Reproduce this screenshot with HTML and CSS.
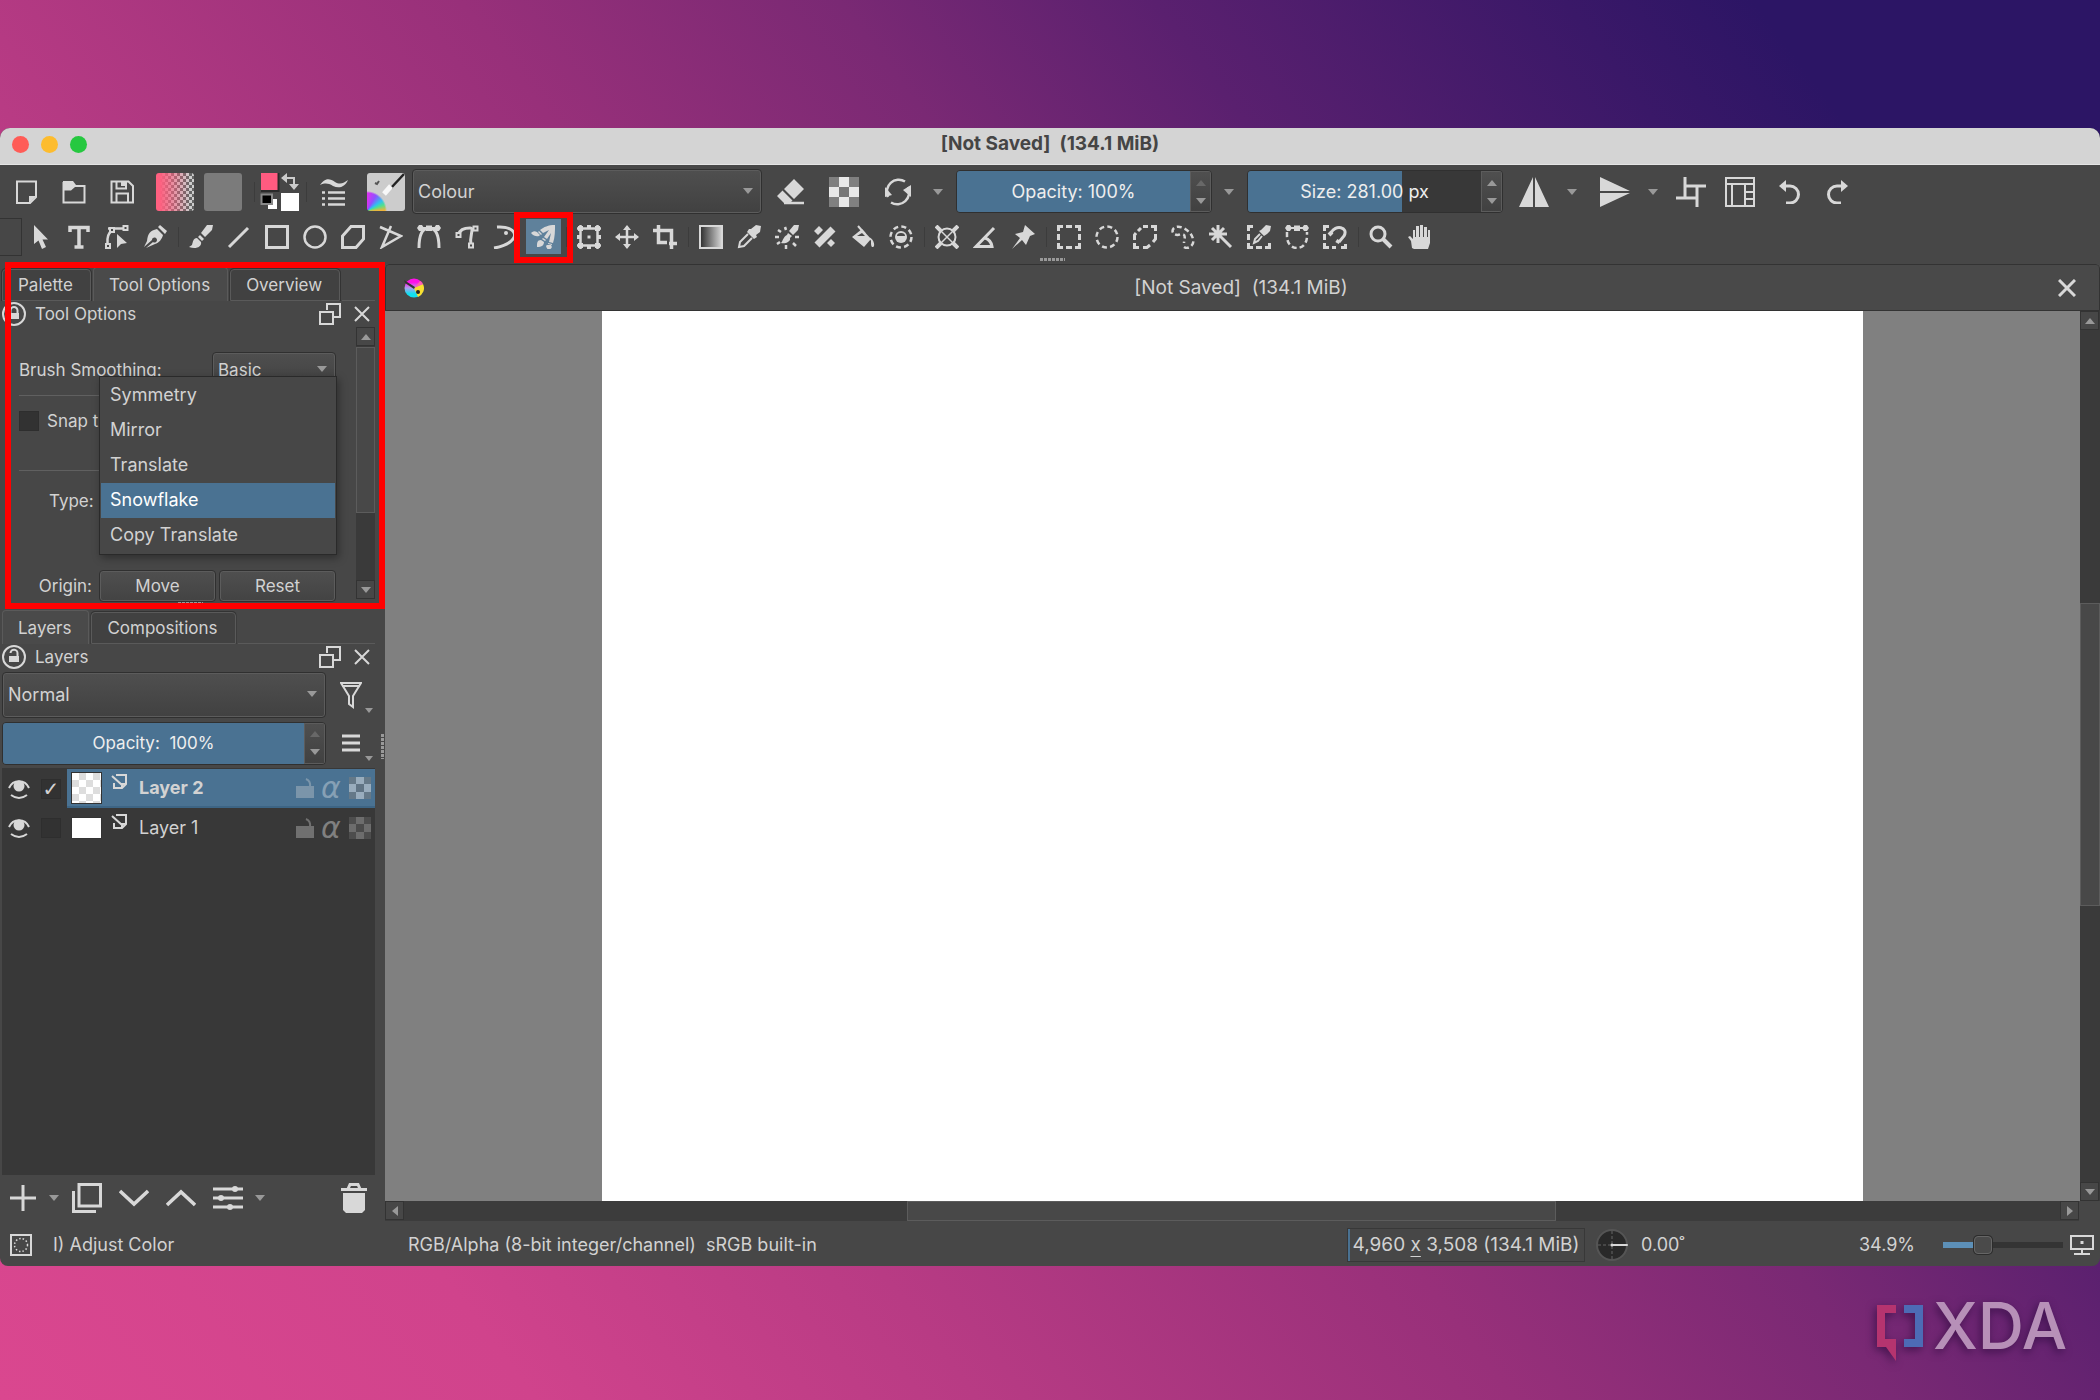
FILE: index.html
```html
<!DOCTYPE html>
<html lang="en">
<head>
<meta charset="utf-8">
<title>[Not Saved] (134.1 MiB)</title>
<link rel="stylesheet" href="styles.css">
</head>
<body>
<div class="window">
  <header class="titlebar">
    <div class="lights"><button class="light red" aria-label="Close"></button><button class="light yellow" aria-label="Minimise"></button><button class="light green" aria-label="Zoom"></button></div>
    <h1 class="window-title">[Not Saved]  (134.1 MiB)</h1>
    <span></span>
  </header>

  <div class="toolbar main-bar">
    <div class="group">
      <button class="btn" aria-label="New"><svg class="ic" viewBox="0 0 24 24"><path d="M3 1.500H22V17L16 23H3Z" stroke-width="2"/><path class="f" d="M22 16H15V23Z"/></svg></button>
      <button class="btn" aria-label="Open"><svg class="ic" viewBox="0 0 24 24"><path d="M1.500 2V22.500H22.500V6H12" stroke-width="2"/><path class="f" d="M1 1H11L14 5H23V7H13L9 10.500H1Z"/></svg></button>
      <button class="btn" aria-label="Save"><svg class="ic" viewBox="0 0 24 24"><path d="M1.500 1.500H18.500L23 6V22.500H1.500Z" stroke-width="2"/><path d="M6.500 22V13.500H18V22M6.500 2V8.500H16V2" stroke-width="2"/><path class="f" d="M11 2H15V6H11Z"/></svg></button>
    </div>
    <div class="group swatches">
      <button class="swatch gradient" aria-label="Fill gradient"></button>
      <button class="swatch pattern" aria-label="Fill pattern"></button>
    </div>
    <span class="sep"></span>
    <button class="colours" aria-label="Foreground and background colour">
      <svg class="plain" width="40" height="40" viewBox="0 0 40 40"><path d="M1 1H18V18H1Z" fill="#ff5b80"/><path d="M1 19H18.500V1" stroke="#2a2a2a"/><path d="M8 27H17V37H8Z" fill="#fff"/><path d="M1.500 22.500H12V32H1.500Z" fill="#000" stroke="#888"/><path d="M21 21H39V39H21Z" fill="#fff"/><path d="M21 6L27 1V11ZM29 12H39L34 18Z" fill="#ccc"/><path d="M26 6H34V13" stroke="#ccc" stroke-width="2"/></svg>
    </button>
    <span class="sep"></span>
    <button class="btn" aria-label="Brush settings"><svg class="ic big" viewBox="0 0 30 30"><path class="f" d="M1 8C7 0 11 2 16 5C21 8 25 6 29 3C26 10 20 12 14 9C9 6 6 6 1 8Z"/><path d="M9 15.500H26M9 21.500H26M9 27.500H26M3 15.500H6M3 21.500H6M3 27.500H6"/></svg></button>
    <button class="swatch preset" aria-label="Brush preset">
      <svg class="plain" width="38" height="38" viewBox="0 0 38 38"><path d="M37 1L24 15" stroke="#222" stroke-width="2.500"/><path d="M24 13L17 21" stroke="#f8f8f8" stroke-width="5"/><path d="M8 10L10 11L12 8" stroke="#555" stroke-width="2"/></svg>
    </button>
    <span class="combo wide"><select aria-label="Blending mode"><option>Colour</option></select></span>
    <div class="group spread">
      <button class="btn" aria-label="Eraser"><svg class="ic big" viewBox="0 0 30 30"><path class="f" d="M19 2L29 12L19 22L9 12Z M7.500 13.500L17.500 23.500L15 26H9L2 19Z"/><path d="M9 26H29"/></svg></button>
      <button class="btn" aria-label="Preserve alpha"><span class="checker"></span></button>
      <button class="btn" aria-label="Reload preset"><svg class="ic big" viewBox="0 0 30 30"><path d="M5 20A12 12 0 0 1 22 4.500M25 10A12 12 0 0 1 8 25.500"/><path class="f" d="M2 10L2 20L9 18ZM28 20L28 8L20 13Z"/></svg></button>
    </div>
    <button class="drop" aria-label="Reload options"></button>
    <span class="spin opacity"><input type="text" value="Opacity: 100%" aria-label="Opacity"><span class="steps"><button class="up off" aria-label="Increase"></button><button class="down" aria-label="Decrease"></button></span></span>
    <button class="drop" aria-label="Opacity options"></button>
    <span class="spin size"><input type="text" value="Size: 281.00 px" aria-label="Size"><span class="steps"><button class="up" aria-label="Increase"></button><button class="down" aria-label="Decrease"></button></span></span>
    <div class="group mirrors">
      <button class="btn" aria-label="Horizontal mirror"><svg class="ic big" viewBox="0 0 30 30"><path class="f" d="M14 0V30H0Z M16 0V30H30Z"/></svg></button>
      <button class="drop" aria-label="Horizontal mirror options"></button>
      <button class="btn" aria-label="Vertical mirror"><svg class="ic big" viewBox="0 0 30 30"><path class="f" d="M0 14H30L0 0Z M0 16H30L0 30Z"/></svg></button>
      <button class="drop" aria-label="Vertical mirror options"></button>
    </div>
    <div class="group last">
      <button class="btn" aria-label="Wrap around"><svg class="ic big" viewBox="0 0 30 30"><path d="M9 0V21M0 21H21M9 9H30M21 9V30" stroke-width="3"/></svg></button>
      <button class="btn" aria-label="Workspaces"><svg class="ic big" viewBox="0 0 30 30"><path d="M1 1H29V29H1ZM1 7H29M7 7V29M20 7V29M20 15H29M20 22H29" stroke-width="2"/></svg></button>
      <button class="btn" aria-label="Undo"><svg class="ic" viewBox="0 0 24 24"><path d="M8 6H13A8.500 8.500 0 0 1 13 23H9" stroke-width="3"/><path class="f" d="M2 6L9 0V12Z"/></svg></button>
      <button class="btn" aria-label="Redo"><svg class="ic" viewBox="0 0 24 24"><path d="M16 6H11A8.500 8.500 0 0 0 11 23H15" stroke-width="3"/><path class="f" d="M22 6L15 0V12Z"/></svg></button>
    </div>
  </div>

  <div class="toolbar tool-bar">
    <span class="stub"></span>
    <button class="tool" aria-label="Select shapes"><svg class="ic" viewBox="0 0 24 24"><path class="f" d="M5 0V19L9.500 15.500L13 24L17 22L13.500 14.500H19Z"/></svg></button>
    <button class="tool" aria-label="Text"><svg class="ic" viewBox="0 0 24 24"><path d="M3 7V2.500H21V7M12 2V22M7.500 22H16.500" stroke-width="3.500"/></svg></button>
    <button class="tool" aria-label="Edit shapes"><svg class="ic" viewBox="0 0 24 24"><path d="M2.500 18V14Q3 7 9 4.500M3 3.500H19" /><path d="M5 3H9V7H5ZM18.500 1H22.500V5H18.500ZM1 19H5V23H1Z" fill="#474747" stroke-width="2"/><path class="f" d="M12 9V23L16 19L22 18Z"/></svg></button>
    <button class="tool" aria-label="Calligraphy"><svg class="ic" viewBox="0 0 24 24"><path class="f" d="M15 2L22 9L24 6L17 0Z M14 4C7 6 5 8 4 16L1 22L9 15A2.500 2.500 0 1 1 10 17L3 23L12 19C16 18 19 14 20 10Z"/></svg></button>
    <span class="sep"></span>
    <button class="tool" aria-label="Freehand brush"><svg class="ic" viewBox="0 0 24 24"><path class="f" d="M24 0H18L12 8L16 12L23 5Z M11 10L15 14L13 16L9 12Z M8 13C4 13 4 17 3 20L0 22C8 25 13 21 12 17Z"/></svg></button>
    <button class="tool" aria-label="Line"><svg class="ic" viewBox="0 0 24 24"><path d="M2 22L21 3" stroke-width="3"/></svg></button>
    <button class="tool" aria-label="Rectangle"><svg class="ic" viewBox="0 0 24 24"><path d="M1.500 1.500H22.500V22.500H1.500Z" stroke-width="3"/></svg></button>
    <button class="tool" aria-label="Ellipse"><svg class="ic" viewBox="0 0 24 24"><circle cx="12" cy="12" r="10.500"/></svg></button>
    <button class="tool" aria-label="Polygon"><svg class="ic" viewBox="0 0 24 24"><path d="M10 1.500H22.500V14L15 22.500H1.500V11Z" stroke-width="3"/></svg></button>
    <button class="tool" aria-label="Polyline"><svg class="ic" viewBox="0 0 24 24"><path d="M1 2L22 11L3 22L12 1"/></svg></button>
    <button class="tool" aria-label="Bezier curve"><svg class="ic" viewBox="0 0 24 24"><path d="M2 23C2 9 6 3 12 3S22 9 22 23" stroke-width="3"/><path d="M3 3H21M10 1.500H14V5H10Z" stroke-width="2"/><path class="f" d="M0 3L2 0H5L7 3L5 6H2Z M17 3L19 0H22L24 3L22 6H19Z"/></svg></button>
    <button class="tool" aria-label="Freehand path"><svg class="ic" viewBox="0 0 24 24"><path d="M4 9C5 4 10 3 15 3C20 3 14 10 16 20" stroke-width="3"/><path d="M1.500 8H5.500V12H1.500ZM18.500 1.500H22.500V5.500H18.500ZM14 18.500H18V22.500H14Z" fill="#474747" stroke-width="2"/></svg></button>
    <button class="tool" aria-label="Dynamic brush"><svg class="ic" viewBox="0 0 24 24"><path d="M4 2C18 1 25 8 20 14C16 19 8 22 1 23" stroke-width="3"/><circle class="f" cx="13" cy="8" r="2"/></svg></button>
    <button class="tool active" aria-label="Multibrush"><svg class="ic" viewBox="0 0 24 24"><path class="f" d="M24 0C17 0 13 2 9 5L12 8L18 5L13 12L16 14L20 8L18 17L22 18C24 12 24 6 24 0ZM8 6L11 9L10 10L7 7ZM6 7C3 5 1 7 0 8C3 12 8 12 9 10ZM12 13L15 15L14 16L11 14ZM10 15C6 15 6 18 6 22C11 22 13 20 13 17ZM17 18L21 19V20L17 19ZM16 20C14 21 16 23 17 25C20 24 22 23 20 20Z"/></svg><span class="mark tool-mark"></span></button>
    <span class="sep"></span>
    <button class="tool" aria-label="Transform"><svg class="ic" viewBox="0 0 24 24"><path d="M3.500 0V24M20.500 0V24M0 3.500H24M0 20.500H24"/><path class="f" d="M1 1H6V6H1ZM18 1H23V6H18ZM1 18H6V23H1ZM18 18H23V23H18ZM10.500 10.500H13.500V13.500H10.500ZM10 0H14V3H10ZM10 21H14V24H10ZM0 10H3V14H0ZM21 10H24V14H21Z"/></svg></button>
    <button class="tool" aria-label="Move"><svg class="ic" viewBox="0 0 24 24"><path d="M12 3V21M3 12H21"/><path class="f" d="M12 0L16 5H8ZM12 24L16 19H8ZM0 12L5 8V16ZM24 12L19 8V16Z"/></svg></button>
    <button class="tool" aria-label="Crop"><svg class="ic" viewBox="0 0 24 24"><path d="M5.500 0V17.500H14M0 5.500H18.500V24M16 18.500H24" stroke-width="3.500"/></svg></button>
    <span class="sep"></span>
    <button class="tool" aria-label="Gradient"><span class="gradient-icon"></span></button>
    <button class="tool" aria-label="Colour picker"><svg class="ic" viewBox="0 0 24 24"><path class="f" d="M14 4L19 0L24 1L23 7L19 10L20 12L17 14L10 7L12 4Z"/><path d="M11 9L3 17L2 22L7 21L15 13" stroke-width="2"/></svg></button>
    <button class="tool" aria-label="Colourise mask"><svg class="ic" viewBox="0 0 24 24"><path class="f" d="M24 0H19L14 6L18 10L23 5Z M13 8L17 11L15 13C16 17 10 19 6 18C8 16 8 12 12 10Z"/><path d="M10 2L11 5M3 5L6 7M0 12H4M2 19L5 17M11 20V24M18 18L21 21M20 12H24" stroke-width="2.500"/></svg></button>
    <button class="tool" aria-label="Smart patch"><svg class="ic" viewBox="0 0 24 24"><path d="M4 20L20 4" stroke-width="7"/><path class="f" d="M6 1L10 5L5 10L1 6ZM18 14L22 18L18 22L14 18Z"/></svg></button>
    <button class="tool" aria-label="Fill"><svg class="ic" viewBox="0 0 24 24"><path class="f" d="M1 12L11 4L20 14L13 22ZM18 12C24 15 24 22 22 22S20 20 20 16Z"/><path d="M7 1L14 9" stroke-width="2"/><path d="M6 11H14L11 8Z" fill="#474747" stroke="none"/></svg></button>
    <button class="tool" aria-label="Enclose and fill"><svg class="ic" viewBox="0 0 24 24"><circle cx="12" cy="12" r="10.500" stroke-dasharray="5 3.250"/><circle class="f" cx="12" cy="12" r="6"/><path d="M8 11A4 3 0 0 1 16 11Z" fill="#474747" stroke="none"/></svg></button>
    <span class="sep"></span>
    <button class="tool" aria-label="Assistants"><svg class="ic" viewBox="0 0 24 24"><circle cx="12" cy="12" r="8.500" stroke-width="2"/><path d="M2 2L22 22M22 2L2 22" stroke-width="1.500"/><path d="M1 1L6 6M23 1L18 6M1 23L6 18M23 23L18 18" stroke-width="4"/></svg></button>
    <button class="tool" aria-label="Measure"><svg class="ic" viewBox="0 0 24 24"><path d="M21 3L3 21.500H19Q18 15 12 13" stroke-width="3"/></svg></button>
    <button class="tool" aria-label="Reference images"><svg class="ic" viewBox="0 0 24 24"><path class="f" d="M14 0L24 9L19 11L15 20L11 15L1 24L9 13L4 9L12 7Z"/></svg></button>
    <span class="sep"></span>
    <button class="tool" aria-label="Rectangular selection"><svg class="ic" viewBox="0 0 24 24"><path d="M1.500 6V1.500H6M18 1.500H22.500V6M22.500 18V22.500H18M6 22.500H1.500V18M9 1.500H15M9 22.500H15M1.500 9V15M22.500 9V15" stroke-width="3"/></svg></button>
    <button class="tool" aria-label="Elliptical selection"><svg class="ic" viewBox="0 0 24 24"><circle cx="12" cy="12" r="10.500" stroke-dasharray="5 3.250"/></svg></button>
    <button class="tool" aria-label="Polygonal selection"><svg class="ic" viewBox="0 0 24 24"><path d="M10 1.500H15M18 1.500H22.500V6M22.500 9V14L20 17M17 20L14 22.500H10M6 22.500H1.500V18M1.500 15V10L3 8M5 6L8 3" stroke-width="3"/></svg></button>
    <button class="tool" aria-label="Freehand selection"><svg class="ic" viewBox="0 0 24 24"><path d="M13 22C17 25 24 20 22 14C20 5 8 -1 3 3C-1 7 4 12 10 9C16 9 13 14 13 18" stroke-dasharray="5 3"/></svg></button>
    <button class="tool" aria-label="Similar selection"><svg class="ic" viewBox="0 0 24 24"><path d="M9 0V18M0 9H18M3 3L22 22M3 15L15 3" stroke-width="3"/></svg></button>
    <button class="tool" aria-label="Colour selection"><svg class="ic" viewBox="0 0 24 24"><path d="M6 1.500H1.500V6M1.500 9V15M1.500 18V22.500H6M9 22.500H15M18 22.500H22.500V18" stroke-width="3"/><path class="f" d="M14 5L19 0L24 1L23 6L20 9L17 11L12 6Z"/><path d="M13 9L8 14L7 18L11 16L15 11" stroke-width="2"/></svg></button>
    <button class="tool" aria-label="Bezier selection"><svg class="ic" viewBox="0 0 24 24"><path d="M2 7V11C2 27 22 27 22 11V7" stroke-dasharray="5 3"/><path d="M3 3H21M10 1.500H14V5H10Z" stroke-width="2"/><path class="f" d="M0 3L2 0H5L7 3L5 6H2Z M17 3L19 0H22L24 3L22 6H19Z"/></svg></button>
    <button class="tool" aria-label="Magnetic selection"><svg class="ic" viewBox="0 0 24 24"><path d="M6 1.500H1.500V6M1.500 9V15M1.500 18V22.500H6M9 22.500H13M18 22.500H22.500V19" stroke-width="3"/><path d="M8 8C12 -1 26 2 21 11L16 17" stroke-width="3"/><path d="M6 10L9 7M14 18L16 15" stroke-width="4"/></svg></button>
    <span class="sep"></span>
    <button class="tool" aria-label="Zoom"><svg class="ic" viewBox="0 0 24 24"><circle cx="9" cy="9" r="7" stroke-width="3"/><path d="M14 14L22 22" stroke-width="4"/></svg></button>
    <button class="tool" aria-label="Pan"><svg class="ic" viewBox="0 0 24 24"><path class="f" d="M5 23L4 16L1 12L3 11L6 14V5H8V12H9V1H12V12H13V0H16V12H17V2H20V12H21V5H23V18L21 24H7Z"/></svg></button>
    <span class="grip across toolbar-grip"></span>
  </div>

  <div class="workspace">
    <aside class="sidebar">
      <section class="dock options-dock">
        <nav class="tabs"><button class="tab">Palette</button><button class="tab on">Tool Options</button><button class="tab">Overview</button><span class="tab-fill"></span></nav>
        <div class="dock-head">
          <svg class="lock" viewBox="0 0 24 24"><circle cx="12" cy="12" r="11"/><path d="M8.500 11V8.500A3.500 3.500 0 0 1 15.500 8.500V11"/><path class="f" d="M7 11H17V17H7Z"/></svg>
          <h2>Tool Options</h2>
          <button class="mini" aria-label="Float"><svg class="float" viewBox="0 0 22 22"><path d="M8 7V1H21V14H14M1 9H14V21H1Z"/></svg></button>
          <button class="mini" aria-label="Close"><svg class="close" viewBox="0 0 16 16"><path d="M1 1L15 15M15 1L1 15"/></svg></button>
        </div>
        <div class="options-body">
          <form class="form">
            <div class="row"><label for="smoothing">Brush Smoothing:</label><span class="combo basic"><select id="smoothing"><option>Basic</option></select></span></div>
            <hr>
            <div class="row snap"><input type="checkbox" id="snap"><label for="snap">Snap t</label></div>
            <hr>
            <div class="row type"><span id="type-label">Type:</span></div>
            <div class="row origin"><span class="origin-label">Origin:</span><button type="button" class="push">Move</button><button type="button" class="push">Reset</button></div>
            <ul class="popup" role="listbox" aria-labelledby="type-label">
              <li role="option">Symmetry</li>
              <li role="option">Mirror</li>
              <li role="option">Translate</li>
              <li role="option" class="picked" aria-selected="true">Snowflake</li>
              <li role="option">Copy Translate</li>
            </ul>
          </form>
          <div class="vscroll"><button class="arrow"><i class="tri up"></i></button><div class="track"><div class="thumb"></div></div><button class="arrow"><i class="tri"></i></button></div>
        </div>
        <span class="grip across"></span>
        <span class="mark dock-mark"></span>
      </section>

      <section class="dock layers-dock">
        <nav class="tabs"><button class="tab on">Layers</button><button class="tab">Compositions</button><span class="tab-fill"></span></nav>
        <div class="dock-head">
          <svg class="lock" viewBox="0 0 24 24"><circle cx="12" cy="12" r="11"/><path d="M8.500 8A3.500 3.500 0 0 1 15.500 8.500V11"/><path class="f" d="M7 11H17V17H7Z"/></svg>
          <h2>Layers</h2>
          <button class="mini" aria-label="Float"><svg class="float" viewBox="0 0 22 22"><path d="M8 7V1H21V14H14M1 9H14V21H1Z"/></svg></button>
          <button class="mini" aria-label="Close"><svg class="close" viewBox="0 0 16 16"><path d="M1 1L15 15M15 1L1 15"/></svg></button>
        </div>
        <div class="layer-row">
          <span class="combo blend"><select aria-label="Layer blending mode"><option>Normal</option></select></span>
          <button class="side-btn" aria-label="Filter"><svg width="22" height="28" viewBox="0 0 22 28"><path d="M1 2H21L13 15V26L9 23V15Z M2 5H20"/></svg><i class="tri"></i></button>
        </div>
        <div class="layer-row short">
          <span class="spin layer-opacity"><input type="text" value="Opacity:  100%" aria-label="Layer opacity"><span class="steps"><button class="up off" aria-label="Increase"></button><button class="down" aria-label="Decrease"></button></span></span>
          <button class="side-btn" aria-label="Layer menu"><svg width="20" height="18" viewBox="0 0 20 18"><path d="M1 2H19M1 9H19M1 16H19" stroke-width="3"/></svg><i class="tri"></i></button>
        </div>
        <ul class="layers">
          <li class="layer">
            <svg class="eye" viewBox="0 0 22 22"><circle class="f" cx="11" cy="8" r="5.500"/><path d="M1 10C5 1 17 1 21 10M3 17Q11 23 19 17"/></svg>
            <input type="checkbox" checked aria-label="Select Layer 2">
            <div class="layer-main chosen"><span class="thumbnail clear"></span><svg class="paint" viewBox="0 0 16 16"><path d="M5 2H15V11L11 15H3V10M1 3L11 12M11 15V11H15"/></svg><span class="name">Layer 2</span>
              <svg class="unlock" viewBox="0 0 18 20"><path class="f" d="M0 8H18V20H0Z"/><path d="M10 1Q15 3 14 9"/></svg><i class="alpha">α</i><span class="checker small"></span></div>
          </li>
          <li class="layer">
            <svg class="eye" viewBox="0 0 22 22"><circle class="f" cx="11" cy="8" r="5.500"/><path d="M1 10C5 1 17 1 21 10M3 17Q11 23 19 17"/></svg>
            <input type="checkbox" aria-label="Select Layer 1">
            <div class="layer-main"><span class="thumbnail"></span><svg class="paint" viewBox="0 0 16 16"><path d="M5 2H15V11L11 15H3V10M1 3L11 12M11 15V11H15"/></svg><span class="name">Layer 1</span>
              <svg class="unlock" viewBox="0 0 18 20"><path class="f" d="M0 8H18V20H0Z"/><path d="M10 1Q15 3 14 9"/></svg><i class="alpha">α</i><span class="checker small"></span></div>
          </li>
        </ul>
        <div class="layer-tools">
          <button aria-label="Add layer"><svg width="28" height="28" viewBox="0 0 28 28"><path d="M14 1V27M1 14H27" stroke-width="3"/></svg></button>
          <button class="drop" aria-label="Add options"></button>
          <button class="after-drop" aria-label="Duplicate"><svg width="30" height="30" viewBox="0 0 30 30"><path d="M7 1.500H28.500V23H7ZM1.500 8V28.500H24" stroke-width="3"/></svg></button>
          <button class="step" aria-label="Move down"><svg width="30" height="30" viewBox="0 0 30 30"><path d="M1 8L15 21L29 8" stroke-width="3.500"/></svg></button>
          <button class="step" aria-label="Move up"><svg width="30" height="30" viewBox="0 0 30 30"><path d="M1 22L15 9L29 22" stroke-width="3.500"/></svg></button>
          <button class="step" aria-label="Properties"><svg width="30" height="30" viewBox="0 0 30 30"><path d="M0 6H30M0 15H30M0 24H30" stroke-width="3"/><circle class="f" cx="22" cy="6" r="3"/><circle class="f" cx="8" cy="15" r="3"/><circle class="f" cx="17" cy="24" r="3"/></svg></button>
          <button class="drop" aria-label="Properties options"></button>
          <button class="trash" aria-label="Delete layer"><svg width="28" height="30" viewBox="0 0 28 30"><path d="M1 6.500H27M8 6L10 1.500H18L20 6" stroke-width="3"/><path class="f" d="M3 10H25V27L22 30H6L3 27Z"/></svg></button>
        </div>
        <span class="grip down-grip"></span>
      </section>
    </aside>

    <main class="document">
      <div class="doc-head">
        <svg class="plain" viewBox="0 0 20 20" width="20" height="20"><defs><linearGradient id="k" x1="0" y1="0" x2="0" y2="1"><stop offset=".2" stop-color="#ff10e8"/><stop offset=".5" stop-color="#b0a0f0"/><stop offset=".8" stop-color="#10e0f0"/></linearGradient></defs><circle cx="10" cy="10" r="9.500" fill="url(#k)"/><path d="M10 10L19 6A9.500 9.500 0 0 1 14 19Z" fill="#f8e030"/><path d="M10 10L19 6A9 9 0 0 0 16 3Z" fill="#ff60b0"/><path d="M0 2L11 9L10 11L1 5Z" fill="#333"/><circle cx="14" cy="14" r="2" fill="#222"/></svg>
        <h2>[Not Saved]  (134.1 MiB)</h2>
        <button class="mini" aria-label="Close document"><svg width="18" height="18" viewBox="0 0 18 18"><path d="M1 1L17 17M17 1L1 17" stroke-width="3"/></svg></button>
      </div>
      <div class="view">
        <div class="canvas"><div class="paper"></div></div>
        <div class="vscroll"><button class="arrow"><i class="tri up"></i></button><div class="track"><div class="thumb"></div></div><button class="arrow"><i class="tri"></i></button></div>
      </div>
      <div class="hscroll"><button class="arrow"><i class="tri left"></i></button><div class="track"><div class="thumb"></div></div><button class="arrow"><i class="tri right"></i></button><span class="corner"></span></div>
    </main>
  </div>

  <footer class="status">
    <div class="status-left">
      <button class="sel" aria-label="Selection mode"><svg width="22" height="22" viewBox="0 0 22 22"><path d="M1 1H21V21H1Z" stroke-width="2"/><circle cx="11" cy="11" r="6.500" stroke-width="1.500" stroke-dasharray="1.500 2"/></svg></button>
      <span>I) Adjust Color</span>
    </div>
    <span class="profile">RGB/Alpha (8-bit integer/channel)  sRGB built-in</span>
    <button class="dims">4,960 <u>x</u> 3,508 (134.1 MiB)</button>
    <svg class="dial" viewBox="0 0 32 32"><circle cx="16" cy="16" r="15" fill="#292929" stroke="#555" stroke-width="2"/><path d="M16 2V30M2 16H16" stroke="#666" stroke-width="1" stroke-dasharray="3 2"/><path d="M16 16H31" stroke-width="2"/><circle class="f" cx="16" cy="16" r="1.500"/><circle class="f" cx="31" cy="16" r="1"/></svg>
    <span class="angle">0.00˚</span>
    <span class="zoom">34.9%</span>
    <input class="slider" type="range" min="0" max="100" value="30" aria-label="Zoom level">
    <button class="sel" aria-label="Fit view"><svg width="24" height="20" viewBox="0 0 24 20"><path d="M1 1H23V14H1ZM12 14V18M4 19H20" stroke-width="2"/><path class="f" d="M10.500 6H13.500V9H10.500Z"/></svg></button>
  </footer>
</div>
<div class="brand">
  <svg class="plain" width="48" height="58" viewBox="0 0 48 58"><path d="M19 1H0V43H9L19 57V35H8V9H19Z" fill="#b5346f"/><path d="M27 1H46V43H27V35H38V9H27Z" fill="#4d6bb5"/></svg>
  <span>XDA</span>
</div>
</body>
</html>
```
FILE: styles.css
```css
* { box-sizing: border-box; }
body {
  margin: 0;
  min-height: 100vh;
  display: flex;
  flex-direction: column;
  padding-top: 128px;
  background: linear-gradient(53deg, #da478f 0%, #d0438c 17%, #b83b84 31%, #98307a 48%, #7a2974 60%, #5a206f 70%, #3a1868 83%, #2c1565 89%);
  color: #d2d2d2;
  font: 17px/22px Inter, "Liberation Sans", sans-serif;
}
button, input, select { font: inherit; color: inherit; margin: 0; }
button { background: none; border: 0; padding: 0; display: flex; align-items: center; justify-content: center; }
h1, h2, ul { margin: 0; padding: 0; font: inherit; list-style: none; }
h1, h2 { white-space: pre; }
svg { fill: none; stroke: #d8d8d8; stroke-width: 2; flex: none; }
svg .f { fill: #d8d8d8; stroke: none; }
svg.plain { stroke: none; }
.ic { width: 24px; height: 24px; stroke-width: 2.5; }
.ic.big { width: 30px; height: 30px; }

.window { flex: 1; display: flex; flex-direction: column; background: #474747; border-radius: 10px 10px 8px 8px; overflow: hidden; }
.titlebar { display: grid; grid-template-columns: 1fr auto 1fr; align-items: center; height: 37px; padding: 0 12px 4px; background: #d4d4d4; border-bottom: 1px solid #e4e4e4; }
.window-title { font-weight: 700; font-size: 19px; color: #454545; }
.lights { display: flex; gap: 12px; }
.light { width: 17px; height: 17px; border-radius: 50%; }
.light.red { background: #ff5c57; }
.light.yellow { background: #fdbc2e; }
.light.green { background: #26c840; }

.toolbar { display: flex; align-items: center; }
.main-bar { height: 53px; padding-left: 2px; }
.group { display: flex; align-items: center; }
.btn { width: 48px; height: 40px; flex: none; }
.swatches { gap: 10px; margin: 0 8px 0 10px; }
.swatch { width: 38px; height: 38px; border-radius: 3px; flex: none; overflow: hidden; }
.gradient { background: linear-gradient(90deg, #ff6080 10%, rgba(255,96,128,0) 90%), repeating-conic-gradient(#666 0 25%, #ccc 0 50%) 0 0 / 6px 6px; }
.pattern { background: #7b7b7b; }
.preset { background: radial-gradient(circle at 0 100%, transparent 18px, #ccc 20px), conic-gradient(from 0deg at 0 100%, #e030f0 0deg, #9050ff 30deg, #30c0f0 55deg, #50e090 70deg, #ffb030 90deg); margin: 0 7px 0 9px; }
.sep { width: 8px; height: 20px; flex: none; background: linear-gradient(#3c3c3c, #3c3c3c) 4px 0 / 1px 100% no-repeat; }
.colours { width: 44px; height: 40px; }
.spread { gap: 6px; margin: 0 6px 0 4px; }
.checker { width: 30px; height: 30px; background: conic-gradient(#777 0 0) 10px 10px / 10px 10px no-repeat, linear-gradient(90deg, transparent 10px, #e8e8e8 10px 20px, transparent 20px), linear-gradient(#808080 10px, #e8e8e8 10px 20px, #808080 20px); }
.drop { width: 20px; height: 24px; flex: none; }
.drop::before, .tri, .steps button::before, .combo::after { content: ""; border: solid transparent; border-width: 6px 5px 0; border-top-color: #999; width: 0; height: 0; }
.combo { position: relative; flex: none; display: flex; }
.combo select { appearance: none; width: 100%; padding: 0 5px; border: 1px solid #303030; border-radius: 4px; outline: 0; background: linear-gradient(#4f4f4f, #414141); box-shadow: inset 0 0 0 1px #5c5c5c; }
.combo::after { position: absolute; right: 9px; top: calc(50% - 4px); pointer-events: none; }
.combo.wide { width: 350px; height: 45px; }
.combo.wide select, .blend select { font-size: 18px; }
.spin { display: flex; height: 43px; border: 1px solid #303030; border-radius: 4px; flex: none; overflow: hidden; }
.spin input { flex: 1; min-width: 0; border: 0; padding: 0; text-align: center; background: #4a7292; color: #eee; font-size: 18px; }
.size input { background: linear-gradient(90deg, #4a7292 66%, #383838 66%); }
.opacity, .size { width: 256px; margin: 0 7px 0 8px; }
.steps { width: 21px; display: flex; flex-direction: column; justify-content: center; gap: 12px; background: linear-gradient(#4f4f4f, #414141); border: 1px solid #5c5c5c; }
.steps .up::before, .tri.up { border-width: 0 5px 6px; border-color: transparent; border-bottom-color: #999; }
.steps .up.off::before { border-bottom-color: #686868; }
.mirrors .drop { margin: 0 9px 0 4px; }
.mirrors .drop:last-child { margin-right: 4px; }
.last { gap: 1px; }

.tool-bar { height: 46px; padding-bottom: 9px; position: relative; }
.stub { width: 22px; height: 38px; border: solid #333; border-width: 1px 1px 1px 0; }
.tool { width: 38px; height: 35px; flex: none; position: relative; }
.active { background: linear-gradient(#5f819b, #5f819b) center / 35px 35px no-repeat; }
.mark { position: absolute; border: 6px solid #f00; pointer-events: none; z-index: 5; }
.tool-mark { inset: -7px -11px -9px -10px; }
.gradient-icon { width: 24px; height: 24px; border: 2px solid #d8d8d8; background: linear-gradient(90deg, #333, #d0d0d0); }
.grip { display: block; background: repeating-linear-gradient(90deg, #999 0 3px, transparent 3px 4px); }
.grip.across { width: 25px; height: 3px; }
.toolbar-grip { position: absolute; left: calc(50% - 10px); bottom: 3px; }

.workspace { flex: 1; display: flex; min-height: 0; }
.sidebar { width: 385px; flex: none; display: flex; flex-direction: column; }
.dock { position: relative; display: flex; flex-direction: column; padding: 0 10px 0 2px; }
.options-dock { height: 345px; padding-top: 3px; }
.dock-mark { inset: -2px 0 0 5px; }
.options-dock .grip { margin: 2px auto 0 176px; }
.tabs { display: flex; align-items: stretch; height: 34px; }
.tab { padding: 0 17px 0 15px; margin-top: 2px; background: #414141; border: 1px solid #5a5a5a; border-radius: 4px 4px 0 0; box-shadow: 0 0 0 1px #333; clip-path: inset(-1px -1px 0 -1px); margin-right: 2px; }
.tab.on { background: #4a4a4a; border-bottom: 0; margin-top: 0; box-shadow: none; }
.tab-fill { flex: 1; border-bottom: 1px solid #5a5a5a; }
.dock-head { display: flex; align-items: center; height: 26px; }
.dock-head h2 { flex: 1; margin-left: 9px; }
.lock { width: 24px; height: 24px; }
.float { width: 22px; height: 22px; }
.close { width: 16px; height: 16px; }
.mini { margin-left: 13px; }
.mini:last-child { margin-right: 5px; }
.options-body { display: flex; height: 272px; }
.form { flex: 1; position: relative; padding: 25px 20px 0 17px; display: flex; flex-direction: column; }
.row { display: flex; align-items: center; height: 35px; flex: none; }
.row label { flex: 1; }
.basic { width: 124px; height: 35px; }
.form hr { width: 100%; margin: 8px 0 12px; border: 0; border-top: 1px solid #606060; }
.form .snap { gap: 8px; height: 26px; margin-bottom: 28px; }
input[type=checkbox] { appearance: none; width: 20px; height: 20px; background: #323232; border: 1px solid #2e2e2e; display: grid; place-items: center; }
input[type=checkbox]:checked::before { content: "✓"; font: 20px/18px "DejaVu Sans"; }
.type { margin-left: 30px; }
.form .origin { margin-top: 52px; height: 32px; gap: 3px; }
.origin-label { width: 77px; text-align: right; padding-right: 4px; }
.push { flex: 1; height: 32px; border: 1px solid #303030; border-radius: 4px; background: linear-gradient(#4f4f4f, #434343); box-shadow: inset 0 0 0 1px #5c5c5c; }
.popup { position: absolute; left: 97px; right: 19px; top: 49px; padding: 1px; border: 1px solid #2a2a2a; background: #474747; box-shadow: 2px 3px 8px rgba(0,0,0,.35); font-size: 18px; }
.popup li { height: 35px; line-height: 34px; padding-left: 9px; }
.popup .picked { background: #4a7292; color: #fff; }
.vscroll { width: 19px; flex: none; display: flex; flex-direction: column; background: #3a3a3a; }
.arrow { width: 19px; height: 19px; flex: none; background: #474747; border: 1px solid #5a5a5a; outline: 1px solid #333; outline-offset: -1px; }
.track { flex: 1; }
.thumb { background: #484848; border: 1px solid #5c5c5c; }
.vscroll .thumb { margin-top: 1px; height: 71%; }

.layers-dock { flex: 1; padding-top: 1px; }
.layer-row { display: flex; align-items: center; height: 50px; }
.layer-row.short { height: 46px; }
.blend { width: 324px; height: 46px; }
.layer-opacity { width: 324px; }
.layer-opacity input { white-space: pre; font-size: 17px; }
.side-btn { flex: 1; height: 36px; position: relative; }
.side-btn .tri { position: absolute; right: 2px; bottom: 0; border-width: 5px 4px 0; }
.layers { flex: 1; background: #383838; margin-top: 2px; padding-top: 1px; }
.layer { display: flex; align-items: center; height: 39px; }
.eye { width: 22px; height: 22px; margin: 0 11px 0 6px; }
.layer-main { flex: 1; display: flex; align-items: center; align-self: stretch; margin-left: 6px; padding: 0 4px; }
.chosen { background: #4a7292; font-weight: 700; border-bottom: 2px solid #3d6585; }
.thumbnail { width: 31px; height: 22px; border: 1px solid #333; background: #fff; }
.thumbnail.clear { height: 32px; background: repeating-conic-gradient(#ddd 0 25%, #fff 0 50%) 0 0 / 14px 14px; }
.paint { width: 16px; height: 16px; margin: 0 12px 14px 9px; }
.name { flex: 1; font-size: 18px; }
.unlock { width: 18px; height: 20px; opacity: .35; }
.alpha { width: 20px; margin: 0 8px 0 7px; font: italic 30px/30px "DejaVu Sans", sans-serif; color: #808080; }
.checker.small { width: 22px; height: 22px; opacity: .3; background: linear-gradient(#777, #777) 7px 7px / 8px 8px no-repeat, linear-gradient(90deg, transparent 7px, #e8e8e8 7px 15px, transparent 15px), linear-gradient(#808080 7px, #e8e8e8 7px 15px, #808080 15px); }
.chosen .alpha { color: #86a0b5; }
.chosen .checker { opacity: .5; }
.layer-tools { display: flex; align-items: center; height: 46px; padding: 0 7px; gap: 7px; }
.layer-tools .step { margin-left: 10px; }
.layer-tools .after-drop { margin-left: 1px; }
.layer-tools .trash { margin-left: auto; }
.down-grip { position: absolute; right: 1px; top: 125px; width: 3px; height: 25px; background: repeating-linear-gradient(#999 0 3px, transparent 3px 4px); }

.document { flex: 1; display: flex; flex-direction: column; min-width: 0; }
.doc-head { display: flex; align-items: center; height: 47px; padding: 0 23px 0 18px; border: 1px solid #5a5a5a; border-bottom-color: #333; border-radius: 4px 4px 0 0; outline: 1px solid #333; outline-offset: -1px; background: #494949; }
.doc-head h2 { flex: 1; text-align: center; font-size: 19px; }
.doc-head .mini { margin: 0; }
.view { flex: 1; display: flex; }
.canvas { flex: 1; padding: 0 217px; background: #808080; display: flex; }
.paper { flex: 1; background: #fff; }
.view .vscroll { width: 20px; }
.view .thumb { margin-top: 273px; height: 303px; }
.hscroll { display: flex; height: 20px; background: #3c3c3c; }
.hscroll .track { display: flex; padding-left: 503px; }
.hscroll .thumb { width: 649px; }
.corner { width: 21px; background: #474747; }
.tri.left { border-width: 5px 6px 5px 0; border-color: transparent #999; }
.tri.right { border-width: 5px 0 5px 6px; border-color: transparent #999; }

.status { display: flex; align-items: center; height: 45px; padding: 2px 6px 0 10px; font-size: 18px; }
.status-left { width: 398px; display: flex; gap: 21px; align-items: center; }
.profile { flex: 1; white-space: pre; }
.dims { height: 34px; width: 238px; border: 1px solid #383838; font-size: 19px; box-shadow: inset 3px 0 0 -1px #4a7292; text-underline-offset: 5px; white-space: pre; }
.dial { width: 32px; height: 32px; margin: 0 13px 0 11px; }
.angle { width: 218px; }
.zoom { width: 84px; }
.slider { appearance: none; width: 120px; height: 20px; margin-right: 7px; background: linear-gradient(90deg, #5d90b8 30%, #343434 30%) 0 50% / 100% 6px no-repeat; }
.slider::-webkit-slider-thumb { appearance: none; width: 18px; height: 18px; border-radius: 4px; background: #4a4a4a; border: 1px solid #666; box-shadow: 0 0 0 1px #2c2c2c; }

.brand { height: 134px; flex: none; display: flex; justify-content: flex-end; align-items: center; gap: 8px; padding-right: 33px; color: #b790b8; font-weight: 500; font-size: 64px; line-height: 64px; filter: drop-shadow(-2px 3px 4px rgba(20,0,40,.5)); }
.brand span { margin-top: -14px; }
```
